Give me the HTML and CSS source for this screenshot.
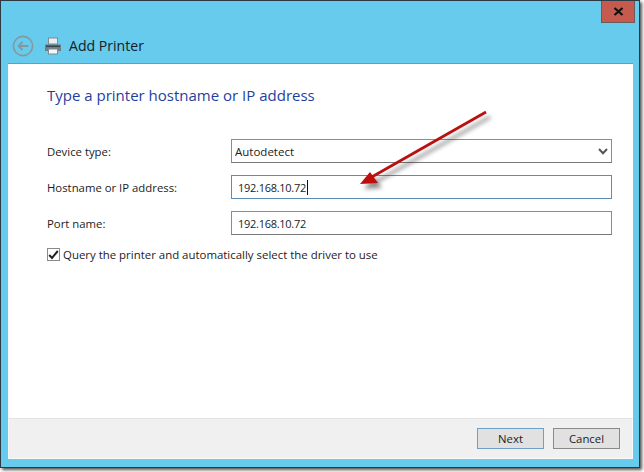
FILE: index.html
```html
<!DOCTYPE html>
<html lang="en">
<head>
<meta charset="utf-8">
<title>Add Printer</title>
<link rel="stylesheet" href="styles.css">
</head>
<body>
<div class="window">
  <div class="close"><svg width="11" height="9" viewBox="0 0 11 9"><path d="M1.5 1L9.5 8M9.5 1L1.5 8" stroke="#111" stroke-width="2.2" fill="none"/></svg></div>
  <header class="titlebar">
    <svg class="back" width="22" height="22" viewBox="0 0 22 22"><circle cx="11" cy="11" r="9.6" fill="none" stroke="#86989f" stroke-width="1.6"/><path d="M16.5 11H6.5M10.5 7L6.5 11L10.5 15" fill="none" stroke="#86989f" stroke-width="1.8"/></svg>
    <svg class="printer" width="18" height="18" viewBox="0 0 18 18"><rect x="4.5" y="1" width="9" height="6" fill="#e8eef2" stroke="#7f8a93"/><path d="M1 7.5h16v6.5h-3v-2H4v2H1z" fill="#737d85"/><rect x="2" y="8.5" width="14" height="1.5" fill="#3d454c"/><rect x="4.5" y="12" width="9" height="5" fill="#f4f7f9" stroke="#7f8a93"/></svg>
    <span class="wintitle">Add Printer</span>
  </header>
  <main class="panel">
    <div class="content">
      <h1 class="heading">Type a printer hostname or IP address</h1>
      <div class="form">
        <label class="lbl">Device type:</label>
        <div class="field select"><span>Autodetect</span><svg width="10" height="7" viewBox="0 0 10 7"><path d="M1 1L5 5.2L9 1" fill="none" stroke="#555" stroke-width="2"/></svg></div>
        <label class="lbl">Hostname or IP address:</label>
        <div class="field active"><span class="num">192.168.10.72</span><i class="caret"></i></div>
        <label class="lbl">Port name:</label>
        <div class="field"><span class="num">192.168.10.72</span></div>
      </div>
      <div class="check">
        <span class="box"><svg width="11" height="10" viewBox="0 0 11 10"><path d="M1.2 5L4 8L9.8 1" fill="none" stroke="#222" stroke-width="2"/></svg></span>
        <span>Query the printer and automatically select the driver to use</span>
      </div>
    </div>
    <footer class="footer">
      <button class="btn default">Next</button>
      <button class="btn">Cancel</button>
    </footer>
  </main>
  <svg class="arrow" width="150" height="95" viewBox="0 0 150 95">
    <defs><filter id="s" x="-20%" y="-20%" width="140%" height="140%"><feGaussianBlur stdDeviation="2.2"/></filter></defs>
    <g transform="translate(4 5)" filter="url(#s)" opacity=".55"><path d="M136 6L20 72" stroke="#333" stroke-width="2.6" fill="none"/><path d="M10 78L20 66L28 77Z" fill="#333"/></g>
    <path d="M136 6L20 72" stroke="#b91010" stroke-width="2.8" fill="none"/>
    <path d="M10 78L20 66L28 77Z" fill="#bd0e0e"/>
  </svg>
</div>
</body>
</html>
```
FILE: styles.css
```css
* { box-sizing: border-box; }
html, body { margin: 0; padding: 0; background: #fff; }
body { width: 644px; height: 472px; overflow: hidden; font-family: "Open Sans", "Noto Sans", sans-serif; color: #222; }
.window { position: relative; width: 640px; height: 468px; background: #66cbec; border: 1px solid #2c3a44; box-shadow: 2px 2px 3px rgba(40,40,40,.8); padding: 0 6px 8px 7px; display: flex; flex-direction: column; }
.close { position: absolute; top: 0; right: 4px; width: 34px; height: 22px; background: #c65a4e; border: 1px solid #6b5a5a; border-top: 0; display: flex; align-items: center; justify-content: center; }
.titlebar { height: 63px; flex: none; display: flex; align-items: center; padding: 26px 0 0 4px; }
.back { margin-right: 10px; }
.printer { margin-right: 7px; }
.wintitle { font-size: 14.1px; color: #15202a; }
.panel { flex: 1; display: flex; flex-direction: column; background: #fff; box-shadow: 0 -1px 0 #5ba3c2; }
.content { flex: 1; padding: 20px 20px 0 39px; }
.heading { margin: 0; font-size: 15px; font-weight: 400; line-height: 22px; color: #1e3f9e; }
.form { display: grid; grid-template-columns: 184px 381px; row-gap: 12px; margin-top: 33px; align-items: center; font-size: 11.35px; }
.lbl { color: #1c1c1c; }
.field { height: 24px; border: 1px solid #8c8c8c; border-bottom-color: #777; display: flex; align-items: center; padding-left: 6px; font-size: 11.5px; color: #1c1c1c; }
.num { font-size: 11px; letter-spacing: -0.28px; }
.select { justify-content: space-between; padding: 0 3px 0 3px; }
.active { border: 1px solid #5b8db5; }
.caret { display: inline-block; width: 1px; height: 15px; background: #111; margin-left: 1px; }
.check { display: flex; align-items: center; margin-top: 12px; font-size: 11.43px; gap: 3px; color: #1c1c1c; }
.box { width: 13px; height: 13px; border: 1px solid #8a8a8a; display: flex; align-items: center; justify-content: center; }
.footer { flex: none; height: 41px; background: #f0f0f0; border: 1px solid #fafafa; border-top: 1px solid #e3e3e3; display: flex; justify-content: flex-end; align-items: center; gap: 9px; padding: 0 12px 0 0; }
.btn { width: 67px; height: 21px; padding: 0; background: #e1e1e1; border: 1px solid #8a8a8a; font: 11.35px "Open Sans", "Noto Sans", sans-serif; color: #1c1c1c; }
.default { border-color: #6f9fc4; }
.arrow { position: absolute; left: 349px; top: 105px; }
```
